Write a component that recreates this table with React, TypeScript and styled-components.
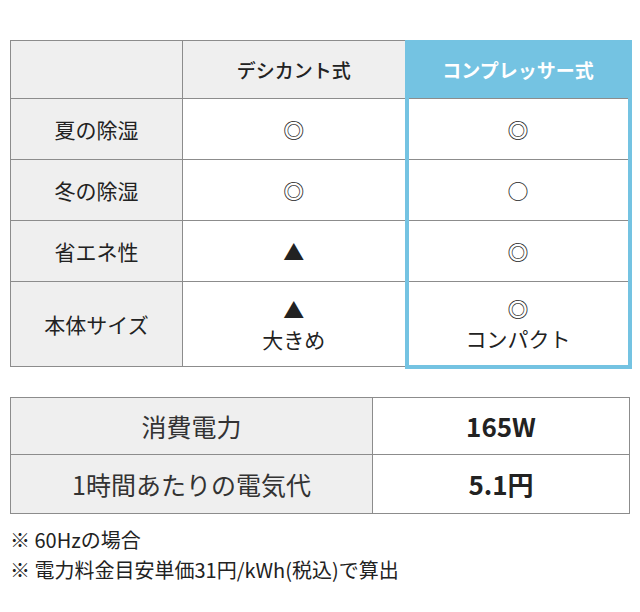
import styled, { createGlobalStyle } from "styled-components";

const GlobalStyle = createGlobalStyle`
  body {
    margin: 0;
    background: #fff;
    font-family: "Noto Sans CJK JP", "Noto Sans", sans-serif;
    color: #222;
  }
`;

const ACCENT = "#74c3e2";
const LINE = "#8c8c8c";
const SHADE = "#efefef";

const Page = styled.div`
  width: 640px;
  box-sizing: border-box;
  padding: 40px 11px 0 10px;
`;

const Compare = styled.table`
  width: 619px;
  border-collapse: collapse;
  table-layout: fixed;
`;

const HeadCell = styled.th<{ $accent?: boolean }>`
  height: 57px;
  padding: 0;
  font-size: 19px;
  font-weight: 500;
  text-align: center;
  background: ${p => (p.$accent ? ACCENT : SHADE)};
  color: ${p => (p.$accent ? "#fff" : "#222")};
  border: 1px solid ${LINE};
  ${p =>
    p.$accent &&
    `
    font-weight: 700;
    border-left: 4px solid ${ACCENT};
    border-right: 4px solid ${ACCENT};
    border-top: 1px solid ${ACCENT};
  `}
`;

const Label = styled.td<{ $tall?: boolean }>`
  height: ${p => (p.$tall ? 84 : 60)}px;
  padding: 0;
  font-size: 21px;
  text-align: center;
  background: ${SHADE};
  border: 1px solid ${LINE};
`;

const Value = styled.td<{ $accent?: boolean; $last?: boolean }>`
  padding: 0;
  font-size: 21px;
  line-height: 30px;
  text-align: center;
  background: #fff;
  border: 1px solid ${LINE};
  ${p =>
    p.$accent &&
    `
    border-left: 4px solid ${ACCENT};
    border-right: 4px solid ${ACCENT};
  `}
  ${p => p.$accent && p.$last && `border-bottom: 4px solid ${ACCENT};`}
`;

const Spec = styled.table`
  width: 619px;
  margin-top: 28px;
  border-collapse: collapse;
  table-layout: fixed;
`;

const SpecLabel = styled.td<{ $tall?: boolean }>`
  height: ${p => (p.$tall ? 58 : 56)}px;
  padding: 0;
  font-size: 25px;
  text-align: center;
  color: #333;
  background: ${SHADE};
  border: 1px solid ${LINE};
`;

const SpecValue = styled.td`
  padding: 0;
  font-size: 26px;
  font-weight: 700;
  text-align: center;
  background: #fff;
  border: 1px solid ${LINE};
`;

const Notes = styled.ul`
  list-style: none;
  margin: 11px 0 0;
  padding: 0;
  font-size: 20px;
  line-height: 30px;
  color: #222;
`;

type Row = { label: string; desiccant: string; compressor: string; tall?: boolean };

const rows: Row[] = [
  { label: "夏の除湿", desiccant: "◎", compressor: "◎" },
  { label: "冬の除湿", desiccant: "◎", compressor: "○" },
  { label: "省エネ性", desiccant: "▲", compressor: "◎" },
  { label: "本体サイズ", desiccant: "▲\n大きめ", compressor: "◎\nコンパクト", tall: true },
];

const specs = [
  { label: "消費電力", value: "165W" },
  { label: "1時間あたりの電気代", value: "5.1円", tall: true },
];

function Lines({ text }: { text: string }) {
  return (
    <>
      {text.split("\n").map((line, i) => (
        <div key={i}>{line}</div>
      ))}
    </>
  );
}

export default function App() {
  return (
    <Page>
      <GlobalStyle />
      <Compare>
        <colgroup>
          <col style={{ width: 172 }} />
          <col style={{ width: 224 }} />
          <col style={{ width: 223 }} />
        </colgroup>
        <thead>
          <tr>
            <HeadCell />
            <HeadCell>デシカント式</HeadCell>
            <HeadCell $accent>コンプレッサー式</HeadCell>
          </tr>
        </thead>
        <tbody>
          {rows.map((row, i) => (
            <tr key={row.label}>
              <Label $tall={row.tall}>{row.label}</Label>
              <Value>
                <Lines text={row.desiccant} />
              </Value>
              <Value $accent $last={i === rows.length - 1}>
                <Lines text={row.compressor} />
              </Value>
            </tr>
          ))}
        </tbody>
      </Compare>

      <Spec>
        <colgroup>
          <col style={{ width: 362 }} />
          <col style={{ width: 257 }} />
        </colgroup>
        <tbody>
          {specs.map(s => (
            <tr key={s.label}>
              <SpecLabel $tall={s.tall}>{s.label}</SpecLabel>
              <SpecValue>{s.value}</SpecValue>
            </tr>
          ))}
        </tbody>
      </Spec>

      <Notes>
        <li>※ 60Hzの場合</li>
        <li>※ 電力料金目安単価31円/kWh(税込)で算出</li>
      </Notes>
    </Page>
  );
}
